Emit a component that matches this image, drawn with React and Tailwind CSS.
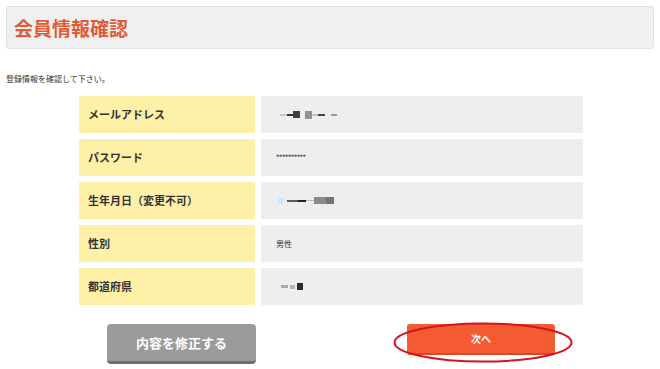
import React from "react";

const font = { fontFamily: '"Noto Sans CJK JP", "Noto Sans", sans-serif' };

function Blob({ parts }) {
  return (
    <div className="flex items-center">
      {parts.map((p, i) => (
        <span
          key={i}
          className="block"
          style={{ width: p[0], height: p[1], background: p[2], marginLeft: p[3] || 0 }}
        />
      ))}
    </div>
  );
}

const rows = [
  {
    label: "メールアドレス",
    value: (
      <Blob
        parts={[
          [7, 2, "#c8c8c8", 4],
          [6, 2, "#333"],
          [7, 7, "#3f3f3f"],
          [7, 8, "#9a8f93", 5],
          [6, 2, "#b9c9c0"],
          [7, 2, "#3a4a66"],
          [6, 2, "#a89a90", 6],
        ]}
      />
    ),
  },
  {
    label: "パスワード",
    value: <span className="text-[7px] font-bold tracking-[-0.6px] text-[#555]">**********</span>,
  },
  {
    label: "生年月日（変更不可）",
    value: (
      <Blob
        parts={[
          [5, 6, "#cfe8f7", 2],
          [17, 2, "#5a5a6a", 4],
          [8, 2, "#222", -6],
          [8, 1, "#bbb"],
          [12, 7, "#8a8a8a"],
          [8, 7, "#7a7073"],
        ]}
      />
    ),
  },
  { label: "性別", value: <span className="text-[8px] text-[#333]">男性</span> },
  {
    label: "都道府県",
    value: (
      <Blob
        parts={[
          [7, 3, "#a8a8b0", 5],
          [5, 4, "#b8b8a8", 2],
          [6, 7, "#2a2a2a", 2],
        ]}
      />
    ),
  },
];

export default function App() {
  return (
    <div className="min-h-[369px] w-[660px] bg-white" style={font}>
      <div className="mx-[6px] pt-[6px]">
        <div className="flex h-[43px] items-center rounded-[3px] border border-[#e2e2e6] bg-[#f0f0f3] pl-[7px]">
          <h1 className="text-[19px] font-bold leading-none text-[#e35a35]">会員情報確認</h1>
        </div>
      </div>

      <p className="ml-[6px] mt-[24px] text-[8px] leading-[12px] text-[#333]">登録情報を確認して下さい。</p>

      <div className="ml-[79px] mt-[11px] flex w-[504px] flex-col gap-[6px]">
        {rows.map((r) => (
          <div key={r.label} className="flex h-[37px] gap-[6px]">
            <div className="flex w-[176px] items-center bg-[#fff0a8] pl-[9px] text-[11px] font-bold text-[#333]">
              {r.label}
            </div>
            <div className="flex flex-1 items-center bg-[#eeeeee] pl-[15px]">{r.value}</div>
          </div>
        ))}
      </div>

      <div className="mt-[19px] flex justify-center gap-[151px] pl-[2px]">
        <button
          type="button"
          className="h-[40px] w-[149px] rounded-[4px] border-b-[3px] border-[#6e6e6e] bg-[#9b9b9b] text-[13px] font-bold text-white"
        >
          内容を修正する
        </button>
        <div className="relative">
          <button
            type="button"
            className="h-[31px] w-[148px] rounded-[3px] border-b-[2px] border-[#d9482a] bg-[#f45b32] text-[10px] font-bold text-white"
          >
            次へ
          </button>
          <svg
            className="pointer-events-none absolute left-[-14px] top-[-2px]"
            width="180"
            height="41"
            viewBox="0 0 180 41"
          >
            <ellipse cx="90" cy="20.5" rx="88.5" ry="19" fill="none" stroke="#d5131c" strokeWidth="2" />
          </svg>
        </div>
      </div>
    </div>
  );
}
